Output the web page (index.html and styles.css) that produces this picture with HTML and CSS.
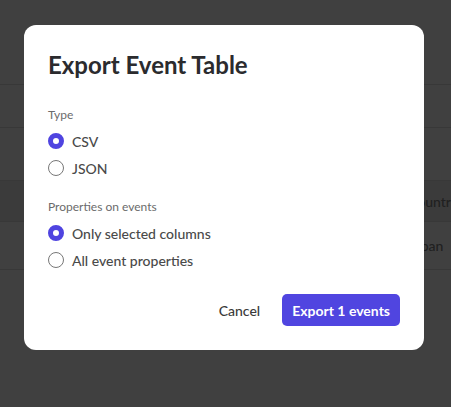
FILE: index.html
```html
<!DOCTYPE html>
<html lang="en">
<head>
    <meta charset="UTF-8">
    <meta name="viewport" content="width=device-width, initial-scale=1.0">
    <title>Export Event Table</title>
    <link rel="stylesheet" href="styles.css">
</head>
<body>
    <div class="page">
        <div class="toolbar"></div>
        <div class="row"></div>
        <div class="row row-tall"></div>
        <div class="row row-head"><span class="cell">Country</span></div>
        <div class="row row-data"><span class="cell">Japan</span></div>
    </div>

    <div class="overlay">
        <div class="dialog">
            <h2 class="dialog-title">Export Event Table</h2>

            <div class="group-label">Type</div>
            <label class="option"><span class="radio checked"></span>CSV</label>
            <label class="option"><span class="radio"></span>JSON</label>

            <div class="group-label second">Properties on events</div>
            <label class="option"><span class="radio checked"></span>Only selected columns</label>
            <label class="option"><span class="radio"></span>All event properties</label>

            <div class="actions">
                <button class="btn btn-plain">Cancel</button>
                <button class="btn btn-primary">Export 1 events</button>
            </div>
        </div>
    </div>
</body>
</html>
```

FILE: styles.css
```css
body {
    font-family: Lato, "Noto Sans", sans-serif;
    background-color: #fff;
    margin: 0;
    padding: 0;
}
.page {
    height: 407px;
    overflow: hidden;
}
.toolbar {
    height: 84px;
    border-bottom: 1px solid #e0e0e0;
}
.row {
    height: 42px;
    border-bottom: 1px solid #e0e0e0;
    display: flex;
    align-items: center;
    overflow: hidden;
}
.row-tall {
    height: 52px;
}
.row-head {
    height: 40px;
    background-color: #ececec;
}
.row-data {
    height: 47px;
}
.cell {
    margin-left: 408px;
    font-size: 14px;
    font-weight: 500;
    color: #808080;
    white-space: nowrap;
}
.overlay {
    position: fixed;
    inset: 0;
    background-color: rgba(0, 0, 0, 0.75);
    padding: 25px 0 0 24px;
}
.dialog {
    width: 400px;
    box-sizing: border-box;
    background-color: #fff;
    border-radius: 12px;
    padding: 26px 24px 24px 24px;
}
.dialog-title {
    margin: 0 0 28px 0;
    font-size: 24px;
    line-height: 28px;
    font-weight: 700;
    color: #2b2b2e;
}
.group-label {
    font-size: 12px;
    line-height: 16px;
    color: #6b6b6b;
    margin-bottom: 8px;
}
.group-label.second {
    margin-top: 21px;
}
.option {
    display: flex;
    align-items: center;
    gap: 8px;
    height: 20px;
    font-size: 14px;
    font-weight: 500;
    color: #4a4a4a;
    margin-bottom: 7px;
}
.radio {
    width: 16px;
    height: 16px;
    box-sizing: border-box;
    border: 1px solid #777;
    border-radius: 50%;
    background-color: #fff;
}
.radio.checked {
    border: 5px solid #4f44e0;
}
.actions {
    display: flex;
    justify-content: flex-end;
    gap: 8px;
    margin-top: 24px;
}
.btn {
    height: 32px;
    padding: 0 12px;
    border: none;
    border-radius: 5px;
    font-family: inherit;
    font-size: 14px;
}
.btn-plain {
    background: none;
    color: #3a3a3a;
    font-weight: 500;
    padding: 0 14px;
}
.btn-primary {
    background-color: #5045e0;
    color: #fff;
    font-weight: 700;
    padding: 0 10px;
}
```
